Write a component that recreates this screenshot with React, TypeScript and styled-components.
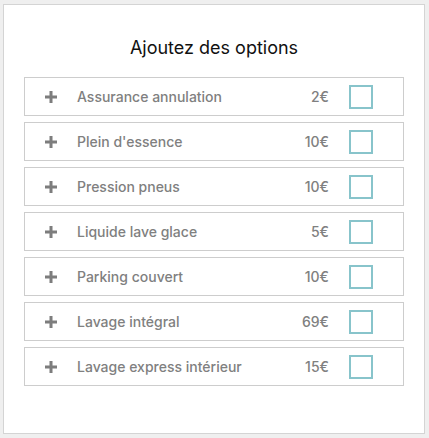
import React from 'react'
import styled, { createGlobalStyle } from 'styled-components'

interface OptionItem {
    label: string
    price: string
}

const options: OptionItem[] = [
    { label: 'Assurance annulation', price: '2€' },
    { label: "Plein d'essence", price: '10€' },
    { label: 'Pression pneus', price: '10€' },
    { label: 'Liquide lave glace', price: '5€' },
    { label: 'Parking couvert', price: '10€' },
    { label: 'Lavage intégral', price: '69€' },
    { label: 'Lavage express intérieur', price: '15€' },
]

const GlobalStyle = createGlobalStyle`
    html, body {
        margin: 0;
        padding: 0;
        background: #efefef;
        font-family: Inter, "Liberation Sans", sans-serif;
    }
`

const PlusIcon = () => (
    <svg width="12" height="12" viewBox="0 0 12 12">
        <path d="M4.5 0h3v4.5H12v3H7.5V12h-3V7.5H0v-3h4.5z" fill="#7d7d7d" />
    </svg>
)

const App = () => {
    return (
        <Page>
            <GlobalStyle />
            <Panel>
                <Title>Ajoutez des options</Title>
                <List>
                    {options.map((o) => (
                        <Row key={o.label}>
                            <PlusBox>
                                <PlusIcon />
                            </PlusBox>
                            <Label>{o.label}</Label>
                            <Price>{o.price}</Price>
                            <Check />
                        </Row>
                    ))}
                </List>
            </Panel>
        </Page>
    )
}

const Page = styled.div`
    width: 429px;
    height: 438px;
    padding: 4px 4px 4px 3px;
    box-sizing: border-box;
`
const Panel = styled.div`
    width: 422px;
    height: 430px;
    box-sizing: border-box;
    background: #fff;
    border: 1px solid #d4d4d4;
    padding: 32px 20px 0 20px;
`
const Title = styled.h2`
    margin: 0;
    text-align: center;
    font-size: 18px;
    font-weight: 400;
    color: #111;
    line-height: 22px;
    margin-bottom: 18px;
`
const List = styled.div`
    display: flex;
    flex-direction: column;
    gap: 6px;
`
const Row = styled.div`
    display: flex;
    align-items: center;
    height: 39px;
    box-sizing: border-box;
    border: 1px solid #cdcdcd;
    padding: 0 30px 0 20px;
`
const PlusBox = styled.div`
    display: flex;
    width: 12px;
    margin-right: 20px;
`
const Label = styled.span`
    flex: 1;
    font-size: 14px;
    font-weight: 500;
    color: #808080;
`
const Price = styled.span`
    font-size: 14px;
    font-weight: 500;
    color: #808080;
    margin-right: 20px;
`
const Check = styled.div`
    width: 24px;
    height: 24px;
    box-sizing: border-box;
    border: 2px solid #88c4cb;
`

export default App
